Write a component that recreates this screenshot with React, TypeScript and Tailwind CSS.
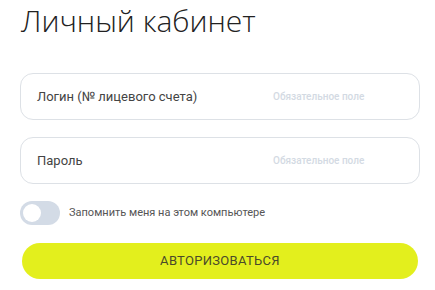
import React from "react";

export default function App() {
  return (
    <div className="w-[435px] h-[290px] bg-white pl-[20px] pr-[15px]" style={{ fontFamily: "Roboto, 'Liberation Sans', sans-serif" }}>
      <h1 className="pl-[1px] text-[30px] leading-[41px] font-light text-[#222]" style={{ fontFamily: "'Open Sans', sans-serif" }}>
        Личный кабинет
      </h1>
      <div className="mt-[32px] flex flex-col gap-[17px]">
        <div className="h-[47px] w-[400px] rounded-[13px] border border-[#dde1e6] flex items-center pl-[16px]">
          <span className="text-[13px] text-[#444] w-[236px]">Логин (№ лицевого счета)</span>
          <span className="text-[10px] font-medium text-[#d3dae3]">Обязательное поле</span>
        </div>
        <div className="h-[47px] w-[400px] rounded-[13px] border border-[#dde1e6] flex items-center pl-[16px]">
          <span className="text-[13px] text-[#444] w-[236px]">Пароль</span>
          <span className="text-[10px] font-medium text-[#d3dae3]">Обязательное поле</span>
        </div>
      </div>
      <div className="mt-[17px] flex items-center gap-[9px] h-[24px]">
        <div className="w-[40px] h-[24px] rounded-full bg-[#d3dbe6] flex items-center pl-[3px]">
          <div className="w-[18px] h-[18px] rounded-full bg-white" />
        </div>
        <span className="text-[11px] text-[#555]">Запомнить меня на этом компьютере</span>
      </div>
      <button className="mt-[18px] ml-[2px] w-[396px] h-[36px] rounded-full bg-[#e3ef1d] text-[13px] text-[#4a4a2a] tracking-[0.3px]">
        АВТОРИЗОВАТЬСЯ
      </button>
    </div>
  );
}
